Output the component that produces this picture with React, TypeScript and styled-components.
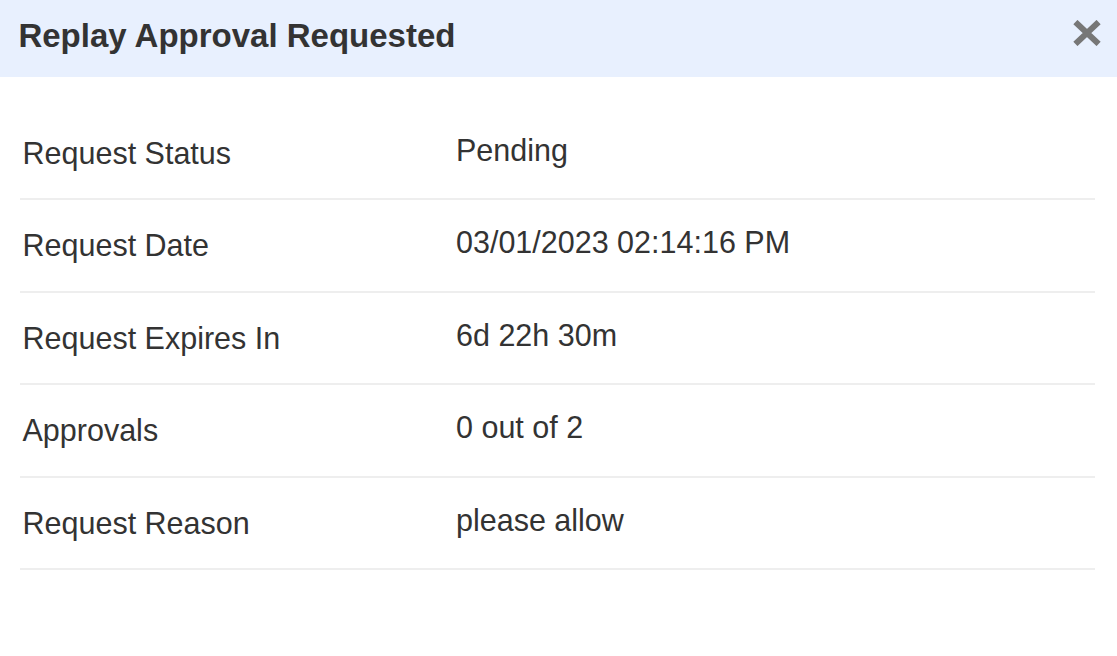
import React from "react";
import styled, { createGlobalStyle } from "styled-components";

const GlobalStyle = createGlobalStyle`
  html, body {
    margin: 0;
    padding: 0;
    background: #ffffff;
  }
  body {
    font-family: "Liberation Sans", Arial, Helvetica, sans-serif;
    color: #333333;
  }
`;

const Dialog = styled.div`
  width: 1117px;
  min-height: 656px;
  background: #ffffff;
`;

const Header = styled.div`
  height: 76.5px;
  box-sizing: border-box;
  background: #e8f0fe;
  display: flex;
  align-items: flex-start;
  justify-content: space-between;
  padding: 19px 16px 0 18.4px;
`;

const Title = styled.h1`
  margin: 0;
  font-size: 33px;
  line-height: 33px;
  font-weight: 700;
  color: #333333;
`;

const CloseButton = styled.button`
  border: 0;
  background: transparent;
  padding: 0;
  margin-top: 1px;
  width: 28px;
  height: 26px;
  display: flex;
  cursor: pointer;
`;

const Body = styled.div`
  padding: 31px 22px 0 20px;
`;

const Row = styled.div`
  display: grid;
  grid-template-columns: 436px 1fr;
  border-bottom: 2px solid #eeeeee;
  padding: 23px 0;
  font-size: 30.5px;
  line-height: 44.5px;
`;

const Label = styled.div`
  padding-left: 2.5px;
  color: #333333;
`;

const Value = styled.div`
  margin-top: -3px;
  color: #333333;
`;

const rows: [string, string][] = [
  ["Request Status", "Pending"],
  ["Request Date", "03/01/2023 02:14:16 PM"],
  ["Request Expires In", "6d 22h 30m"],
  ["Approvals", "0 out of 2"],
  ["Request Reason", "please allow"],
];

export default function App() {
  return (
    <>
      <GlobalStyle />
      <Dialog>
        <Header>
          <Title>Replay Approval Requested</Title>
          <CloseButton aria-label="Close">
            <svg width="28" height="26" viewBox="0 0 28 26">
              <path
                d="M2.4 2.1 L25.6 23.9 M25.6 2.1 L2.4 23.9"
                stroke="#777777"
                strokeWidth="6"
                strokeLinecap="butt"
                fill="none"
              />
            </svg>
          </CloseButton>
        </Header>
        <Body>
          {rows.map(([label, value]) => (
            <Row key={label}>
              <Label>{label}</Label>
              <Value>{value}</Value>
            </Row>
          ))}
        </Body>
      </Dialog>
    </>
  );
}
